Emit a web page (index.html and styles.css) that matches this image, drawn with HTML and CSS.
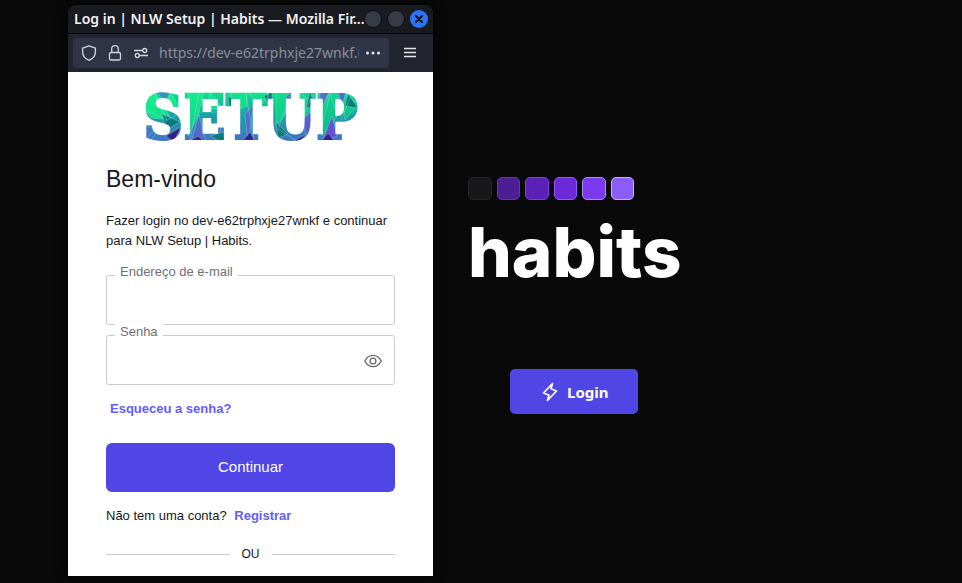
FILE: index.html
```html
<!DOCTYPE html>
<html lang="pt-BR">
<head>
<meta charset="utf-8">
<meta name="viewport" content="width=device-width, initial-scale=1">
<title>Log in | NLW Setup | Habits</title>
<link rel="stylesheet" href="styles.css">
</head>
<body>
<main class="page">
  <section class="window">
    <header class="titlebar">
      <h1 class="window-title">Log in | NLW Setup | Habits — Mozilla Fir...</h1>
      <div class="window-controls">
        <button class="control" type="button" aria-label="Minimizar"></button>
        <button class="control" type="button" aria-label="Maximizar"></button>
        <button class="control control-close" type="button" aria-label="Fechar">
          <svg width="8" height="8" viewBox="0 0 8 8"><path d="M1 1l6 6M7 1L1 7" stroke="#10131c" stroke-width="2" stroke-linecap="round"/></svg>
        </button>
      </div>
    </header>
    <div class="toolbar">
      <div class="address">
        <svg width="16" height="16" viewBox="0 0 16 16" fill="none" stroke="#d5d6dc" stroke-width="1.3" stroke-linejoin="round"><path d="M8 .8L14.4 3.2V7c0 4-2.6 6.8-6.4 8.3C4.2 13.8 1.6 11 1.6 7V3.2z"/></svg>
        <svg width="16" height="16" viewBox="0 0 16 16" fill="none" stroke="#d5d6dc" stroke-width="1.3" stroke-linejoin="round"><rect x="2.500" y="7.500" width="11" height="7.500" rx="1.500"/><path d="M4.700 7.500V4a3.300 3.300 0 0 1 6.600 0v3.500"/></svg>
        <svg width="16" height="16" viewBox="0 0 16 16" fill="none" stroke="#d5d6dc" stroke-width="1.3"><path d="M1 5.500h8.500M6.500 10.500H15"/><circle cx="11.700" cy="5.500" r="2"/><circle cx="4.300" cy="10.500" r="2"/></svg>
        <input class="url" type="text" aria-label="Endereço" value="https://dev-e62trphxje27wnkf.us.auth0.com" readonly>
        <button class="icon-button" type="button" aria-label="Mais ações">
          <svg width="16" height="16" viewBox="0 0 16 16" fill="#e6e6ea"><circle cx="2.500" cy="8" r="1.500"/><circle cx="8" cy="8" r="1.500"/><circle cx="13.500" cy="8" r="1.500"/></svg>
        </button>
      </div>
      <button class="icon-button menu" type="button" aria-label="Menu">
        <svg width="14" height="14" viewBox="0 0 14 14"><path d="M1 2.500h12M1 6.500h12M1 10.500h12" stroke="#e6e6ea" stroke-width="1.3"/></svg>
      </button>
    </div>

    <div class="login">
      <svg class="logo" viewBox="0 0 218 50" role="img" aria-label="SETUP">
        <defs>
          <linearGradient id="base" x1="0" y1="0" x2="0" y2="1"><stop offset="0" stop-color="#12e08c"/><stop offset=".5" stop-color="#1a9fa8"/><stop offset="1" stop-color="#4a6cc8"/></linearGradient>
          <linearGradient id="green" x1="0" y1="0" x2="1" y2="1"><stop offset="0" stop-color="#16f58c"/><stop offset="1" stop-color="#0bb08a"/></linearGradient>
          <linearGradient id="violet" x1="0" y1="0" x2="1" y2="1"><stop offset="0" stop-color="#2f9db8"/><stop offset="1" stop-color="#6a45dc"/></linearGradient>
          <pattern id="facets" x="-2" y="-2" width="222" height="54" patternUnits="userSpaceOnUse">
            <g transform="translate(2 2)" stroke="#a0f8e0" stroke-opacity=".5" stroke-width=".6">
              <rect x="-2" y="-2" width="222" height="54" fill="url(#base)" stroke="none"/>
              <path fill="url(#green)" d="M0 16L12 0L30 28L10 26zM28 0L39 17L25 12zM46 0L62 0L56 24L46 44zM68 0L80 16L65 18zM88 0L104 0L105 14L88 20zM106 0L128 0L118 16zM134 0L150 0L143 23L134 34zM158 0L174 15L160 32zM178 18L188 0L195 25L180 44zM199 0L216 12L203 28z"/>
              <path fill="url(#violet)" d="M12 -2L28 0L24 10zM0 31L13 37L2 50zM49 50L57 22L64 50zM68 34L80 30L76 49zM103 22L112 12L106 50zM144 4L150 0L149 28zM160 28L174 15L166 46zM178 0L187 0L178 20zM196 0L204 0L200 14zM180 50L190 24L195 44z"/>
              <path fill="#0b7a7c" d="M20 22L38 30L24 38zM68 44L82 40L83 52zM86 4L93 8L88 19zM134 30L146 42L136 46zM168 0L174 14L164 16zM206 2L216 16L203 14zM122 4L130 0L130 18z"/>
              <path fill="#342284" d="M24 44L39 35L32 50zM44 51L56 44L64 51zM99 51L108 40L114 51zM150 50L164 42L158 50zM178 51L186 41L194 51z"/>
              <path fill="none" d="M12 0L25 28L8 49M0 16L25 28L39 21M57 0L48 49M55 20L77 20M104 2L112 49M149 2L136 37L155 49M171 2L155 37M188 2L178 42M210 2L198 30"/>
            </g>
          </pattern>
        </defs>
        <text class="logo-text" x="1" y="47" fill="url(#facets)" stroke="url(#facets)" stroke-width="2">SETUP</text>
      </svg>

      <h2 class="welcome">Bem-vindo</h2>
      <p class="intro">Fazer login no dev-e62trphxje27wnkf e continuar para NLW Setup | Habits.</p>

      <form class="form">
        <div class="field">
          <label for="email">Endereço de e-mail</label>
          <input id="email" type="email">
        </div>
        <div class="field">
          <label for="password">Senha</label>
          <input id="password" type="password">
          <button class="reveal" type="button" aria-label="Mostrar senha">
            <svg width="18" height="18" viewBox="0 0 18 18" fill="none" stroke="#65676e" stroke-width="1.3"><path d="M.8 9C2.600 5.300 5.400 3.300 9 3.300S15.400 5.300 17.200 9C15.400 12.700 12.600 14.700 9 14.700S2.600 12.700 .8 9z"/><circle cx="9" cy="9" r="2.900"/></svg>
          </button>
        </div>
        <a class="link forgot" href="#">Esqueceu a senha?</a>
        <button class="continue" type="submit">Continuar</button>
      </form>
      <p class="register">Não tem uma conta? <a class="link" href="#">Registrar</a></p>
      <div class="divider">OU</div>
    </div>
  </section>

  <section class="hero">
    <div class="levels">
      <span class="level level-0"></span>
      <span class="level level-1"></span>
      <span class="level level-2"></span>
      <span class="level level-3"></span>
      <span class="level level-4"></span>
      <span class="level level-5"></span>
    </div>
    <p class="brand">habits</p>
    <button class="login-button" type="button">
      <svg width="20" height="20" viewBox="0 0 20 20" fill="none" stroke="#fff" stroke-width="1.7" stroke-linejoin="round"><path d="M12.500 1.500L3.500 11L9 13.200L7.500 18.500L16.500 9L11 6.800z"/></svg>
      Login
    </button>
  </section>
</main>
</body>
</html>
```
FILE: styles.css
```css
* {
  box-sizing: border-box;
}

body {
  margin: 0;
  min-height: 100vh;
  background: #09090a;
  font-family: "Liberation Sans", Arial, sans-serif;
  color: #16181d;
}

h1, h2, p {
  margin: 0;
}

button {
  border: 0;
  padding: 0;
  font-family: inherit;
  cursor: pointer;
}

svg {
  display: block;
  flex: none;
}

.page {
  display: flex;
  align-items: flex-start;
  gap: 35px;
  padding: 5px 16px 7px 68px;
}

.window {
  flex: 0 1 365px;
  border-radius: 8px 8px 0 0;
  background: linear-gradient(#1a1b20 29px, #fff 29px);
  overflow: hidden;
  box-shadow: 0 0 12px #000;
}

.titlebar {
  display: flex;
  align-items: center;
  height: 29px;
  padding: 0 6px;
  background: #1a1b20;
  border-bottom: 1px solid #050506;
}

.window-title {
  flex: 1;
  min-width: 0;
  white-space: nowrap;
  font: 600 14px/20px "Noto Sans", sans-serif;
  color: #f2f2f4;
}

.window-controls {
  display: flex;
  gap: 7px;
}

.control {
  display: grid;
  place-items: center;
  width: 16px;
  height: 16px;
  border-radius: 50%;
  background: #373b47;
  box-shadow: 0 0 0 1px #0d0e12;
}

.control-close {
  background: #2b74f5;
  box-shadow: 0 0 0 1px #2b74f5;
}

.toolbar {
  display: flex;
  align-items: center;
  height: 38px;
  padding: 0 16px 0 5px;
  gap: 14px;
  background: #22252f;
}

.address {
  flex: 1;
  display: flex;
  align-items: center;
  gap: 10px;
  min-width: 0;
  height: 30px;
  padding: 0 8px;
  border-radius: 4px;
  background: #2f3547;
}

.url {
  flex: 1;
  min-width: 0;
  padding: 0;
  border: 0;
  outline: 0;
  background: none;
  font: 14px/20px "Noto Sans", sans-serif;
  color: #8b8e98;
}

.icon-button {
  background: none;
}

.address .icon-button {
  margin-left: -4px;
}

.login {
  padding: 20px 38px 14px;
}

.logo {
  width: 218px;
  height: 50px;
  margin: 0 auto;
  overflow: visible;
}

.logo-text {
  font: 700 62px "DejaVu Serif Condensed", "DejaVu Serif", serif;
}

.welcome {
  margin-top: 22px;
  font-size: 23px;
  line-height: 30px;
  font-weight: 400;
}

.intro {
  margin-top: 17px;
  font-size: 13px;
  line-height: 20px;
}

.form {
  display: flex;
  flex-direction: column;
  gap: 10px;
  margin-top: 24px;
}

.field {
  position: relative;
}

.field label {
  position: absolute;
  top: -13px;
  left: 9px;
  padding: 0 5px;
  background: #fff;
  font-size: 13px;
  line-height: 20px;
  color: #6f7076;
}

.field input {
  display: block;
  width: 100%;
  height: 50px;
  padding: 0 16px;
  border: 1px solid #c9cace;
  border-radius: 3px;
  background: #fff;
  font-size: 16px;
}

.reveal {
  position: absolute;
  top: 17px;
  right: 13px;
  background: none;
}

.link {
  font-size: 13px;
  line-height: 20px;
  font-weight: 700;
  color: #635dff;
  text-decoration: none;
}

.forgot {
  align-self: flex-start;
  margin: 4px 0 14px 4px;
}

.continue {
  height: 49px;
  padding-bottom: 2px;
  border-radius: 6px;
  background: #4f46e5;
  font-size: 15px;
  color: #fff;
}

.register {
  margin-top: 14px;
  font-size: 13px;
  line-height: 20px;
}

.register .link {
  margin-left: 4px;
}

.divider {
  display: flex;
  align-items: center;
  gap: 12px;
  margin-top: 20px;
  font-size: 12px;
  line-height: 16px;
}

.divider::before,
.divider::after {
  content: "";
  flex: 1;
  height: 1px;
  background: #c9cace;
}

.hero {
  display: flex;
  flex-direction: column;
  align-items: flex-start;
  padding-top: 172px;
}

.levels {
  display: grid;
  grid-template-columns: repeat(6, 1fr);
  gap: 5px;
  width: 166px;
}

.level {
  height: 23px;
  border: 1px solid;
  border-radius: 5px;
}

.level-0 { background: #18181b; border-color: #27272a; }
.level-1 { background: #4c1d95; border-color: #6d28d9; }
.level-2 { background: #5b21b6; border-color: #7c3aed; }
.level-3 { background: #6d28d9; border-color: #8b5cf6; }
.level-4 { background: #7c3aed; border-color: #a78bfa; }
.level-5 { background: #8b5cf6; border-color: #c4b5fd; }

.brand {
  margin-top: 12px;
  font: 800 69px/80px Inter, sans-serif;
  color: #fff;
}

.login-button {
  display: flex;
  align-items: center;
  gap: 7px;
  height: 45px;
  margin: 77px 0 0 42px;
  padding: 0 30px;
  border-radius: 5px;
  background: #4f46e5;
  font: 700 15px/20px "Noto Sans", sans-serif;
  color: #fff;
}
```
